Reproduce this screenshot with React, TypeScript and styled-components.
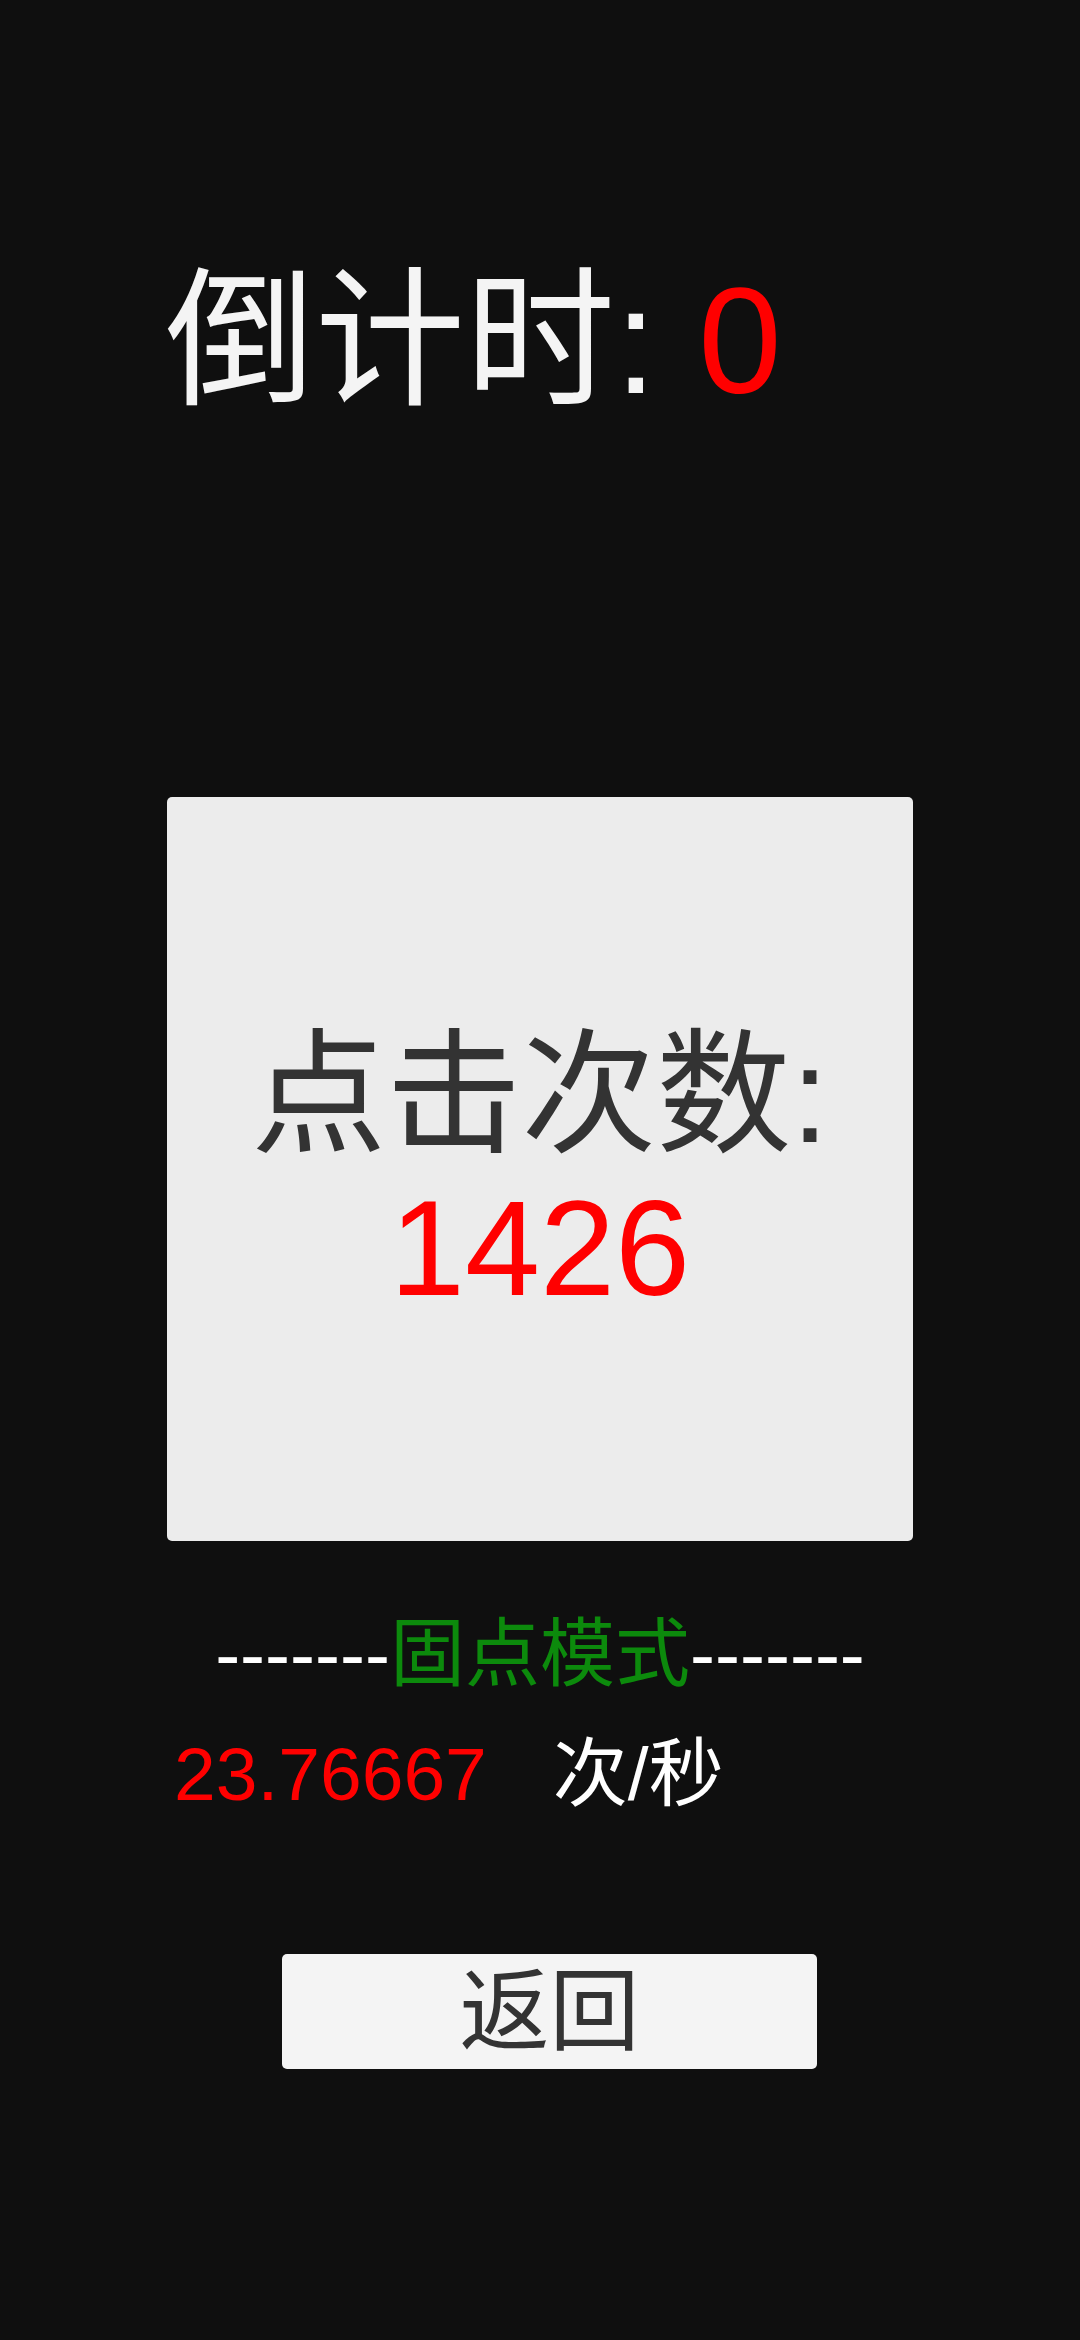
import React from "react";
import styled, { createGlobalStyle } from "styled-components";

const GlobalStyle = createGlobalStyle`
  html, body {
    margin: 0;
    padding: 0;
    background: #0f0f0f;
  }
  body {
    font-family: "Liberation Sans", "Noto Sans CJK SC", sans-serif;
  }
`;

export default function App() {
  return (
    <>
      <GlobalStyle />
      <Screen>
        <Countdown>
          倒计时: <RedText>0</RedText>
        </Countdown>
        <TapPad>
          <TapLabel>点击次数:</TapLabel>
          <TapCount>1426</TapCount>
        </TapPad>
        <ModeLine>
          -------<ModeName>固点模式</ModeName>-------
        </ModeLine>
        <RateRow>
          <RedText>23.76667</RedText>
          <RateUnit>次/秒</RateUnit>
        </RateRow>
        <BackButton type="button">返回</BackButton>
      </Screen>
    </>
  );
}

const Screen = styled.div`
  width: 1080px;
  min-height: 2340px;
  display: flex;
  flex-direction: column;
  background: #0f0f0f;
  font-family: "Liberation Sans", "Noto Sans CJK SC", sans-serif;
`;

const RedText = styled.span`
  color: #ff0000;
`;

const Countdown = styled.div`
  margin-top: 255px;
  padding-left: 165px;
  font-size: 150px;
  line-height: 172px;
  color: #f4f4f4;
  white-space: pre;
`;

const TapPad = styled.div`
  align-self: center;
  margin-top: 370px;
  width: 746px;
  height: 744px;
  box-sizing: border-box;
  padding-top: 6px;
  background: #ececec;
  border-radius: 5px;
  display: flex;
  flex-direction: column;
  align-items: center;
  justify-content: center;
  font-size: 135px;
  line-height: 153px;
`;

const TapLabel = styled.div`
  color: #333333;
`;

const TapCount = styled.div`
  color: #ff0000;
`;

const ModeLine = styled.div`
  margin-top: 70px;
  text-align: center;
  font-size: 75px;
  line-height: 86px;
  color: #ffffff;
  white-space: pre;
`;

const ModeName = styled.span`
  color: #0c8a0c;
`;

const RateRow = styled.div`
  margin-top: 34px;
  padding-left: 174px;
  display: flex;
  font-size: 75px;
  line-height: 86px;
`;

const RateUnit = styled.span`
  margin-left: 66px;
  color: #ffffff;
`;

const BackButton = styled.button`
  margin-top: 137px;
  margin-left: 282px;
  width: 535px;
  height: 115px;
  padding: 0;
  border: none;
  border-radius: 5px;
  background: #f4f4f4;
  color: #333333;
  font-family: "Liberation Sans", "Noto Sans CJK SC", sans-serif;
  font-size: 90px;
  line-height: 1;
  display: flex;
  align-items: center;
  justify-content: center;
`;
